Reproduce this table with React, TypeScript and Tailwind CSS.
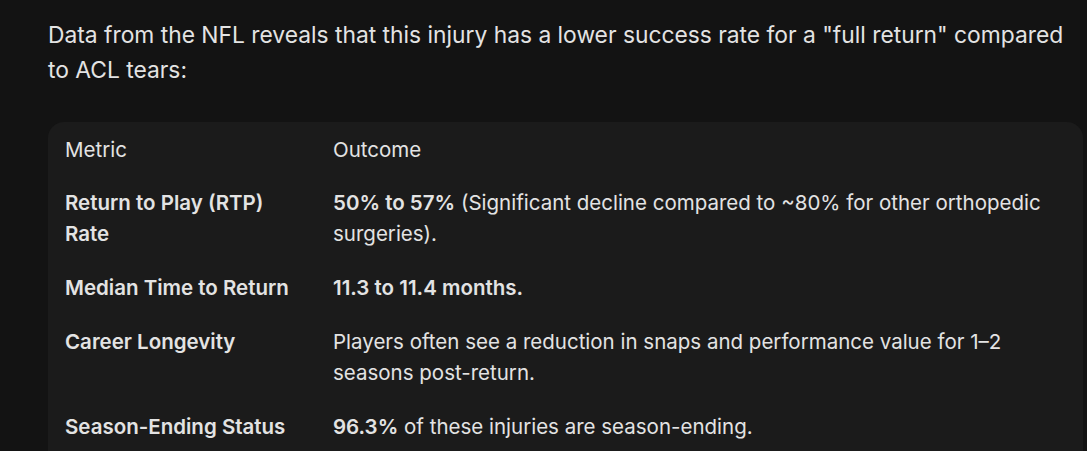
const rows: { metric: string; bold?: string; rest?: string }[] = [
  {
    metric: "Return to Play (RTP) Rate",
    bold: "50% to 57%",
    rest: " (Significant decline compared to ~80% for other orthopedic surgeries).",
  },
  { metric: "Median Time to Return", bold: "11.3 to 11.4 months." },
  {
    metric: "Career Longevity",
    rest: "Players often see a reduction in snaps and performance value for 1–2 seasons post-return.",
  },
  { metric: "Season-Ending Status", bold: "96.3%", rest: " of these injuries are season-ending." },
];

export default function App() {
  return (
    <div
      className="min-h-screen bg-[#131313] pl-12 pr-1 pt-[17px] text-[#e3e3e3]"
      style={{ fontFamily: "Inter, 'Noto Sans', sans-serif" }}
    >
      <p className="pr-2 text-[22.8px] leading-[35px]">
        Data from the NFL reveals that this injury has a lower success rate for a "full return" compared to ACL tears:
      </p>

      <div className="mt-[35px] rounded-t-2xl bg-[#1b1b1b] pl-[17px] pr-7 pb-4 pt-3">
        <table className="w-full border-collapse text-left text-[20.5px] leading-[31px]">
          <thead>
            <tr>
              <th className="w-[268px] pb-[10px] align-top font-normal">Metric</th>
              <th className="pb-[10px] align-top font-normal">Outcome</th>
            </tr>
          </thead>
          <tbody>
            {rows.map((r) => (
              <tr key={r.metric}>
                <td className="py-[11.5px] pr-[33px] align-top font-semibold">{r.metric}</td>
                <td className="py-[11.5px] align-top">
                  {r.bold && <span className="font-semibold">{r.bold}</span>}
                  {r.rest}
                </td>
              </tr>
            ))}
          </tbody>
        </table>
      </div>
    </div>
  );
}
